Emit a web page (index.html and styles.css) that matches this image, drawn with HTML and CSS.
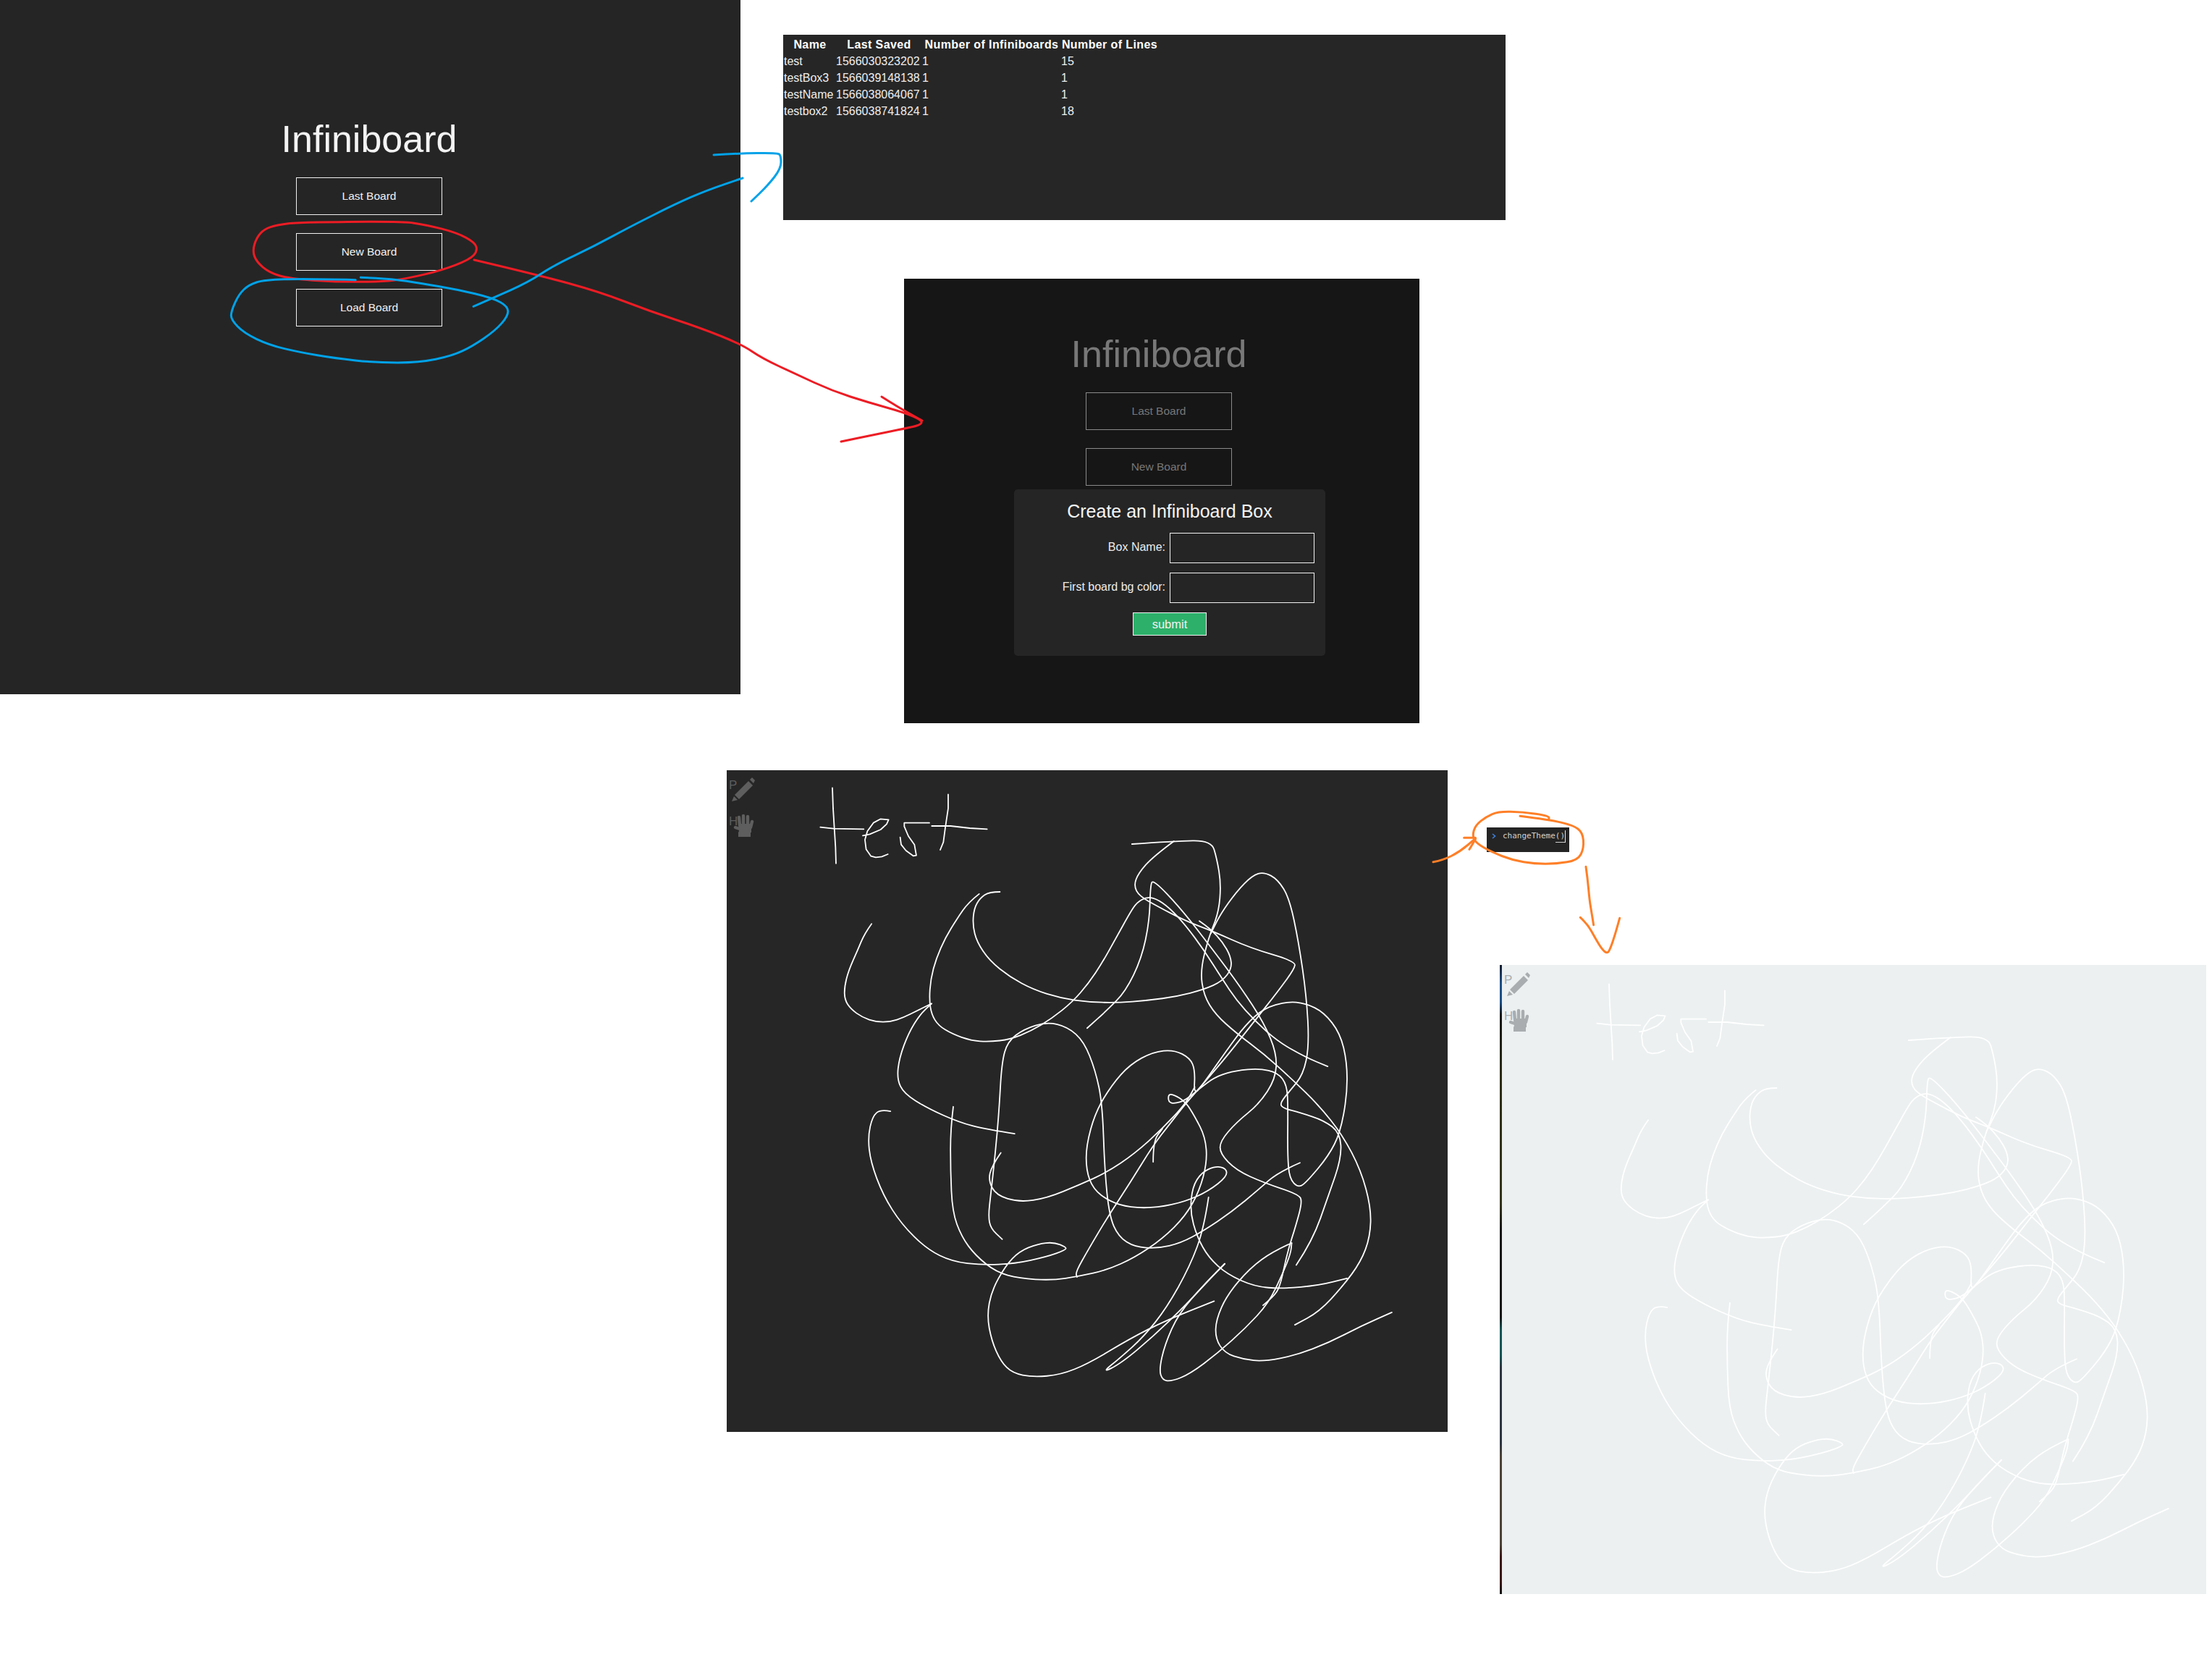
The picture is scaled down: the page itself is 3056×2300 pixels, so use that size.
FILE: index.html
```html
<!DOCTYPE html>
<html lang="en">
<head>
<meta charset="utf-8">
<title>Infiniboard notes</title>
<link rel="stylesheet" href="styles.css">
</head>
<body>
<main class="canvas">

  <section class="panel panel-home">
    <h1 class="title">Infiniboard</h1>
    <button class="menu-btn">Last Board</button>
    <button class="menu-btn">New Board</button>
    <button class="menu-btn">Load Board</button>
  </section>

  <section class="panel panel-table">
    <table class="boxes">
      <colgroup><col class="c1"><col class="c2"><col class="c3"><col class="c4"></colgroup>
      <thead><tr><th>Name</th><th>Last Saved</th><th>Number of Infiniboards</th><th>Number of Lines</th></tr></thead>
      <tbody>
        <tr><td>test</td><td>1566030323202</td><td>1</td><td>15</td></tr>
        <tr><td>testBox3</td><td>1566039148138</td><td>1</td><td>1</td></tr>
        <tr><td>testName</td><td>1566038064067</td><td>1</td><td>1</td></tr>
        <tr><td>testbox2</td><td>1566038741824</td><td>1</td><td>18</td></tr>
      </tbody>
    </table>
  </section>

  <section class="panel panel-new">
    <h1 class="title title-dim">Infiniboard</h1>
    <button class="menu-btn menu-btn-dim">Last Board</button>
    <button class="menu-btn menu-btn-dim">New Board</button>
    <form class="modal">
      <h2 class="modal-title">Create an Infiniboard Box</h2>
      <div class="fields">
        <label class="field-label" for="box-name">Box Name:</label>
        <input class="field-input" id="box-name" type="text">
        <label class="field-label" for="box-color">First board bg color:</label>
        <input class="field-input" id="box-color" type="text">
      </div>
      <button class="submit" type="button">submit</button>
    </form>
  </section>

  <section class="panel panel-board">
    <svg class="drawing" viewBox="1004 1064 996 914" aria-hidden="true">
      <g id="scribble" class="ink">
        <g transform="translate(1000 1060) scale(.3333)">
          <polyline points="450,85 453,170 458,250 463,330 465,398"/>
          <polyline points="400,248 455,254 580,256"/>
          <polyline points="576,283 605,277 650,258 675,235 683,217 650,214 620,230 595,265 585,300 590,340 610,368 630,373 655,370 680,360"/>
          <polyline points="852,230 748,230 748,245 765,285 790,320 798,365 785,367 755,345 735,320 731,290"/>
          <polyline points="930,112 930,170 918,250 910,310 897,342"/>
          <polyline points="862,243 940,243 1020,252 1091,256"/>
        </g>
        <g class="smooth" transform="translate(1000 1100) scale(.6378 .574)">
          <polyline points="320,307 305,330 290,370 270,420 261,460 262,490 275,512 300,532 330,543 360,543 390,532 420,515 450,499"/>
          <polyline points="553,235 530,255 505,295 480,340 460,390 448,440 445,490 450,525 465,552 495,572 535,588 575,591 620,585 665,565 710,535 755,495 790,450 820,400 850,340 880,280 895,255 915,243 935,245 965,268 1000,310 1040,370 1080,440 1110,490 1150,540 1200,590 1260,628 1308,650"/>
          <polyline points="598,230 575,230 555,245 542,270 539,310 548,350 575,395 620,435 670,465 730,486 790,495 850,497 920,491 980,482 1040,465 1080,445 1100,415 1098,385 1080,350 1055,320 1030,300"/>
          <polyline points="884,115 975,108 1056,106 1068,150 1077,210 1072,280 1050,340 1032,420 1040,480 1065,525 1110,570 1170,620 1230,680 1290,745 1340,815 1380,900 1402,990 1400,1060 1380,1120 1340,1180 1290,1240 1237,1272"/>
          <polyline points="975,108 930,145 898,185 888,215 900,240 940,265 1000,300 1060,325 1140,365 1238,397 1236,415 1200,470 1150,540 1090,625 1040,690 1000,740 965,790 930,840 880,930 830,1015 790,1090 762,1145 765,1157"/>
          <polyline points="497,747 491,800 491,900 495,1000 515,1060 545,1105 590,1145 640,1160 710,1165 770,1155 830,1140 890,1110 950,1065 1000,1010 1030,950 1047,880 1043,820 1020,770 1000,735 975,718 963,717 963,735 975,740 1000,732 1040,695 1070,672 1110,660 1160,655 1200,665 1220,695 1222,750 1221,860 1225,920 1245,943 1265,925 1310,865 1335,810 1350,720 1350,640 1335,570 1300,520 1260,498 1220,494 1170,510 1130,550 1090,610 1040,690 1018,720 1021,660 1010,630 975,610 930,615 880,645 840,695 805,760 785,840 785,900 800,945 835,975 880,990 940,990 1000,975 1050,950 1090,915 1088,895 1065,890 1035,905 1015,940 1010,1000 1025,1060 1050,1110 1090,1150 1150,1180 1210,1185 1290,1177 1350,1160"/>
          <polyline points="1230,1075 1190,1095 1140,1135 1090,1200 1066,1260 1065,1305 1085,1340 1125,1355 1170,1360 1240,1345 1310,1315 1380,1275 1447,1242"/>
          <polyline points="1248,882 1200,905 1160,945 1100,1000 1040,1045 990,1075 940,1088 890,1085 855,1060 835,1010 825,900 820,740 805,660 780,590 745,555 700,543 650,560 615,590 602,640 596,760 588,860 578,960 573,1010 578,1040 603,1066"/>
          <polyline points="600,858 580,890 573,925 590,960 640,977 700,967 770,935 830,905 890,860 950,800 1000,740 1020,700"/>
          <polyline points="930,880 930,830 950,800"/>
          <polyline points="630,812 570,802 510,785 440,750 390,715 375,680 380,630 400,570 425,525 450,499"/>
          <polyline points="361,758 340,753 322,770 312,820 318,880 345,960 385,1030 440,1090 495,1120 560,1128 630,1125 700,1108 740,1092 742,1085 715,1073 680,1077 640,1095 610,1130 580,1190 570,1250 580,1310 600,1360 625,1388 670,1398 730,1392 790,1365 880,1305 960,1260 1062,1215"/>
          <polyline points="1050,965 1040,1040 1010,1130 960,1230 910,1300 860,1350 818,1388 860,1365 930,1300 1000,1225 1050,1165 1085,1125"/>
          <polyline points="1085,1125 1040,1175 985,1245 955,1320 943,1380 950,1405 970,1408 1010,1390 1070,1340 1130,1280 1180,1220 1210,1150 1228,1100 1230,1075"/>
          <polyline points="1168,1225 1190,1205 1205,1180 1220,1100 1240,1030 1253,975 1245,958 1170,930 1110,900 1075,860 1075,830 1110,785 1160,740 1195,680 1198,620 1170,545 1120,460 1060,370 990,270 930,200 924,215 922,300 905,390 870,470 830,515 787,558"/>
          <polyline points="1240,1128 1275,1070 1310,960 1338,870 1335,810 1300,780 1250,762 1210,750 1205,738 1225,710 1255,670 1268,600 1262,480 1245,350 1225,245 1200,200 1170,182 1145,190 1110,230 1075,285 1055,330"/>
        </g>
      </g>
    </svg>
    <div class="tools">
      <div class="tool">
        <span class="tool-key">P</span>
        <svg class="tool-icon icon-pencil" viewBox="0 0 33 33" aria-hidden="true"><path d="M24 5 30 11 11 30 5 24Z"/><path d="M4 26 9 31 1 33Z"/><path d="M26 3 29 0 33 4 31 8Z"/></svg>
      </div>
      <div class="tool">
        <span class="tool-key">H</span>
        <svg class="tool-icon icon-hand" viewBox="0 0 29 32" aria-hidden="true"><path class="hand-fingers" d="M9 16 8 5M14 14V3M20 14V4M24 19 26 11M12 22 3 19"/><path d="M7 14H25V26H24V32H7V26L8 24Z"/></svg>
      </div>
    </div>
  </section>

  <section class="console">
    <svg class="prompt" viewBox="0 0 6 8" aria-hidden="true"><path d="M1 1 4.5 4 1 7"/></svg>
    <code class="console-text">changeTheme<span class="console-match">()</span></code>
  </section>

  <section class="panel panel-light">
    <svg class="drawing" viewBox="1002 1062 973 869" aria-hidden="true"><use href="#scribble"/></svg>
    <div class="tools">
      <div class="tool">
        <span class="tool-key">P</span>
        <svg class="tool-icon icon-pencil" viewBox="0 0 33 33" aria-hidden="true"><path d="M24 5 30 11 11 30 5 24Z"/><path d="M4 26 9 31 1 33Z"/><path d="M26 3 29 0 33 4 31 8Z"/></svg>
      </div>
      <div class="tool">
        <span class="tool-key">H</span>
        <svg class="tool-icon icon-hand" viewBox="0 0 29 32" aria-hidden="true"><path class="hand-fingers" d="M9 16 8 5M14 14V3M20 14V4M24 19 26 11M12 22 3 19"/><path d="M7 14H25V26H24V32H7V26L8 24Z"/></svg>
      </div>
    </div>
  </section>

  <svg class="annotations" viewBox="0 0 3056 2300" aria-hidden="true">
    <g class="mark-red smooth">
      <g transform="translate(0 120) scale(.7018 .3333)">
        <polyline points="670,560 790,557 840,572 900,605 935,645 940,680 925,715 870,760 800,795 750,808 660,808 570,795 530,770 505,725 497,680 505,625 520,590 545,572 585,562 670,560"/>
      </g>
      <polyline points="655,359 744,380 828,403 898,430 968,453 1025,476 1053,495 1100,517 1150,540 1200,556 1250,570 1274,581 1272,587 1250,592 1210,600 1162,610"/>
      <polyline points="1218,548 1240,562 1274,581"/>
    </g>
    <g class="mark-blue smooth">
      <g transform="translate(0 120) scale(.7018 .3333)">
        <polyline points="700,800 600,795 520,800 490,820 470,860 455,930 455,965 480,1020 530,1070 590,1100 660,1125 740,1143 825,1143 890,1115 930,1075 975,1010 1000,950 1000,910 970,875 900,840 830,815 770,795 710,790"/>
        <polyline points="932,910 970,875 1040,810 1090,740 1170,660 1240,580 1330,485 1390,430 1462,378"/>
      </g>
      <polyline points="986,214 1018,212 1074,211 1079,215 1079,233 1060,257 1038,278"/>
    </g>
    <g class="mark-orange smooth" transform="translate(1960 1100) scale(.3333)">
      <polyline points="420,82 540,97 640,120 680,150 685,215 660,265 570,280 480,280 390,265 300,230 240,195 222,165 235,120 280,85 330,63 430,65 540,80 540,97"/>
      <polyline points="60,272 100,265 170,230 235,175"/>
      <polyline points="188,172 235,172"/>
      <polyline points="210,220 235,178"/>
      <polyline points="693,292 700,340 708,430 718,490 725,533"/>
      <polyline points="670,502 700,530 730,585 760,635 782,652 795,630 815,570 833,505"/>
    </g>
  </svg>

</main>
<script src="smooth.js"></script>
</body>
</html>
```

FILE: styles.css
```css
* { box-sizing: border-box; }

html, body { margin: 0; padding: 0; background: #fff; }

body { font-family: "Liberation Sans", Arial, sans-serif; }

.canvas {
  position: relative;
  width: 3056px;
  height: 2300px;
  overflow: hidden;
  background: #fff;
}

.panel { position: absolute; color: #fff; }

/* --- Home screen --- */
.panel-home {
  left: 0;
  top: 0;
  width: 1023px;
  height: 959px;
  padding: 166px 3px 0 0;
  background: #252525;
  display: flex;
  flex-direction: column;
  align-items: center;
  gap: 25px;
}

.title {
  margin: 0 0 2px;
  font-size: 52px;
  font-weight: 400;
  line-height: 1;
  color: #f4f4f4;
}

.title-dim { color: #787878; }

.menu-btn {
  width: 202px;
  height: 52px;
  flex: none;
  padding: 0;
  border: 1.5px solid #f0f0f0;
  background: transparent;
  color: #f0f0f0;
  font: 400 15.5px "Liberation Sans", Arial, sans-serif;
}

.menu-btn-dim {
  border-color: #8a8a8a;
  color: #777;
}

/* --- Saved boxes table --- */
.panel-table {
  left: 1082px;
  top: 48px;
  width: 998px;
  height: 256px;
  padding: 2px 0 0 1px;
  background: #262626;
}

.boxes {
  table-layout: fixed;
  width: 517px;
  border-collapse: collapse;
  font-size: 16px;
  line-height: 23px;
  color: #ededed;
}

.c1 { width: 72px; }
.c2 { width: 119px; }
.c3 { width: 192px; }
.c4 { width: 134px; }

.boxes th,
.boxes td {
  padding: 0;
  white-space: nowrap;
}

.boxes th {
  font-weight: 700;
  text-align: center;
  letter-spacing: .4px;
  color: #fff;
}

.boxes td { text-align: left; }

/* --- New board screen with dialog --- */
.panel-new {
  left: 1249px;
  top: 385px;
  width: 712px;
  height: 614px;
  padding: 78px 8px 0 0;
  background: #161616;
  display: flex;
  flex-direction: column;
  align-items: center;
  gap: 25px;
}

.modal {
  position: absolute;
  left: 152px;
  top: 291px;
  width: 430px;
  height: 230px;
  padding: 15px 15px 0 0;
  border-radius: 5px;
  background: #252525;
  display: flex;
  flex-direction: column;
  align-items: center;
}

.modal-title {
  margin: 0 0 15px 15px;
  font-size: 25px;
  font-weight: 400;
  line-height: 30px;
  color: #f4f4f4;
}

.fields {
  align-self: stretch;
  display: grid;
  grid-template-columns: 1fr 200px;
  column-gap: 6px;
  row-gap: 13px;
  align-items: center;
}

.field-label {
  font-size: 16px;
  line-height: 20px;
  text-align: right;
  color: #ececec;
  margin-top: -3px;
}

.field-input {
  width: 200px;
  height: 42px;
  padding: 0 4px;
  border: 1.5px solid #f2f2f2;
  border-radius: 0;
  background: #252525;
}

.submit {
  width: 102px;
  height: 32px;
  margin: 13px 0 0 15px;
  padding: 0;
  border: 1.5px solid #f2f2f2;
  background: #2db16a;
  color: #f2f2f2;
  font: 400 16.5px "Liberation Sans", Arial, sans-serif;
}

/* --- Drawing boards --- */
.panel-board {
  left: 1004px;
  top: 1064px;
  width: 996px;
  height: 914px;
  background: #262626;
  color: #5e5e5e;
}

.panel-light {
  left: 2072px;
  top: 1333px;
  width: 976px;
  height: 869px;
  background: #ecf0f1;
  color: #a9adaf;
  border-left: 3px solid #1a1a1a;
  border-image: linear-gradient(#161a2a 0, #1b4f86 3%, #1b4f86 6%, #151515 8%, #2c2c14 18%, #33331a 38%, #161616 42%, #161616 56%, #0f5555 58%, #0f5555 62%, #2e3440 64%, #2e3440 76%, #4a4236 78%, #4a4236 92%, #3a1616 94%, #3a1616 98%, #111 100%) 1;
}

.drawing {
  position: absolute;
  left: 0;
  top: 0;
  width: 100%;
  height: 100%;
}

.ink {
  fill: none;
  stroke: #fff;
  stroke-width: 1.8;
  stroke-linecap: round;
  stroke-linejoin: round;
}

.ink polyline,
.ink path { vector-effect: non-scaling-stroke; }

.tools {
  position: relative;
  padding: 10px 0 0 3px;
  display: flex;
  flex-direction: column;
  gap: 17px;
}

.tool {
  display: flex;
  align-items: flex-start;
}

.tool-key {
  width: 3px;
  font-size: 17px;
  line-height: 22px;
}

.tool-icon {
  fill: currentColor;
  flex: none;
}

.icon-pencil {
  width: 33px;
  height: 33px;
}

.icon-hand {
  width: 29px;
  height: 32px;
  margin-left: 3px;
}

.hand-fingers {
  fill: none;
  stroke: currentColor;
  stroke-width: 4.4;
  stroke-linecap: round;
}

/* --- Console snippet --- */
.console {
  position: absolute;
  left: 2054px;
  top: 1143px;
  width: 114px;
  height: 34px;
  padding: 4px 0 0 7px;
  background: #242424;
  display: flex;
  align-items: flex-start;
  gap: 9px;
}

.prompt {
  width: 6px;
  height: 8px;
  margin-top: 4px;
  flex: none;
  fill: none;
  stroke: #3f7fd9;
  stroke-width: 1.6;
}

.console-text {
  font: 400 11px/16px "DejaVu Sans Mono", "Liberation Mono", monospace;
  color: #d0d0d0;
  white-space: nowrap;
}

.console-match {
  display: inline-block;
  border-bottom: 1px solid #d0d0d0;
  border-right: 1px solid #e8e8e8;
}

/* --- Hand-drawn annotations --- */
.annotations {
  position: absolute;
  left: 0;
  top: 0;
  width: 3056px;
  height: 2300px;
  pointer-events: none;
}

.annotations polyline,
.annotations path {
  fill: none;
  stroke-width: 3;
  stroke-linecap: round;
  stroke-linejoin: round;
  vector-effect: non-scaling-stroke;
}

.mark-red polyline, .mark-red path { stroke: #ed1c24; }
.mark-blue polyline, .mark-blue path { stroke: #00a2e8; }
.mark-orange polyline, .mark-orange path { stroke: #ff7f27; }
```

FILE: smooth.js
```js
// Turns the traced pen strokes into smooth curves, as a pen tool would draw them.
document.querySelectorAll('.smooth polyline').forEach(function (line) {
  var pts = Array.prototype.map.call(line.points, function (p) { return [p.x, p.y]; });
  var d = 'M' + pts[0].join(' ');
  for (var i = 1; i < pts.length - 1; i++) {
    var mx = (pts[i][0] + pts[i + 1][0]) / 2;
    var my = (pts[i][1] + pts[i + 1][1]) / 2;
    d += 'Q' + pts[i].join(' ') + ' ' + mx + ' ' + my;
  }
  d += 'L' + pts[pts.length - 1].join(' ');
  var path = document.createElementNS('http://www.w3.org/2000/svg', 'path');
  path.setAttribute('d', d);
  line.parentNode.replaceChild(path, line);
});
```
